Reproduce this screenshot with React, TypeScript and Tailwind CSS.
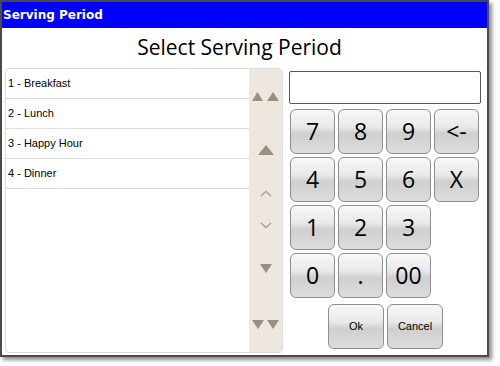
import React from "react";

const periods = ["1 - Breakfast", "2 - Lunch", "3 - Happy Hour", "4 - Dinner"];
const keys = ["7", "8", "9", "<-", "4", "5", "6", "X", "1", "2", "3", "", "0", ".", "00", ""];

const btn =
  "flex items-center justify-center rounded-[6px] border border-[#8e8e8e] bg-[linear-gradient(180deg,#f8f8f8_0%,#e8e8e8_40%,#cfcfcf_55%,#dddddd_100%)] text-black";

function Key({ label }: { label: string }) {
  if (!label) return <div />;
  return (
    <div className={`${btn} h-[45px] w-[45px] text-[23px] leading-none [font-family:'Open_Sans',sans-serif]`}>
      {label}
    </div>
  );
}

export default function App() {
  return (
    <div className="relative h-[366px] w-[500px] overflow-hidden bg-white">
      <div className="flex h-[357px] w-[489px] flex-col border-2 border-[#4a4a4a] bg-white shadow-[3px_3px_4px_rgba(0,0,0,0.45)]">
        <div className="flex h-[26px] items-center bg-[#0000ff] pl-[1px] text-[12px] font-bold text-white [font-family:'DejaVu_Sans',sans-serif]">
          Serving Period
        </div>
        <div className="flex h-[40px] items-center justify-center pr-[10px] text-[21px] text-black [font-family:'Open_Sans',sans-serif]">
          Select Serving Period
        </div>
        <div className="flex pl-[3px]">
          {/* list */}
          <div className="flex h-[285px] w-[278px] rounded-[4px] border border-[#dcdcdc] bg-white">
            <div className="flex-1 [font-family:'Liberation_Sans',sans-serif] text-[11px] text-black">
              {periods.map((p) => (
                <div key={p} className="flex h-[30px] items-center border-b border-[#dedede] pl-[2px]">
                  {p}
                </div>
              ))}
            </div>
            <div className="flex w-[33px] flex-col items-center rounded-tr-[4px] bg-[#ede7df] pt-[23px]">
              <svg width="30" height="9" viewBox="0 0 30 9">
                <polygon points="1,9 6.5,0 12,9" fill="#9a8f80" />
                <polygon points="16,9 22,0 28,9" fill="#9a8f80" />
              </svg>
              <svg className="mt-[44px]" width="16" height="10" viewBox="0 0 16 10">
                <polygon points="0,10 8,0 16,10" fill="#9a8f80" />
              </svg>
              <svg className="mt-[35px]" width="12" height="7" viewBox="0 0 12 7">
                <polyline points="1,6 6,1.5 11,6" fill="none" stroke="#aaa397" strokeWidth="1.6" />
              </svg>
              <svg className="mt-[25px]" width="12" height="7" viewBox="0 0 12 7">
                <polyline points="1,1 6,5.5 11,1" fill="none" stroke="#aaa397" strokeWidth="1.6" />
              </svg>
              <svg className="mt-[35px]" width="12" height="9" viewBox="0 0 12 9">
                <polygon points="0,0 6,9 12,0" fill="#9a8f80" />
              </svg>
              <svg className="mt-[47px]" width="30" height="9" viewBox="0 0 30 9">
                <polygon points="1,0 7,9 13,0" fill="#9a8f80" />
                <polygon points="16,0 22,9 28,0" fill="#9a8f80" />
              </svg>
            </div>
          </div>
          {/* keypad */}
          <div className="ml-[6px] flex flex-col pt-[3px]">
            <div className="h-[33px] w-[192px] rounded-[2px] border border-[#555] bg-white" />
            <div className="ml-[1px] mt-[5px] grid grid-cols-[repeat(4,45px)] gap-[3px]">
              {keys.map((k, i) => (
                <Key key={i} label={k} />
              ))}
            </div>
            <div className="ml-[39px] mt-[6px] flex gap-[3px] [font-family:'Liberation_Sans',sans-serif] text-[11px]">
              <div className={`${btn} h-[45px] w-[56px]`}>Ok</div>
              <div className={`${btn} h-[45px] w-[56px]`}>Cancel</div>
            </div>
          </div>
        </div>
      </div>
    </div>
  );
}
